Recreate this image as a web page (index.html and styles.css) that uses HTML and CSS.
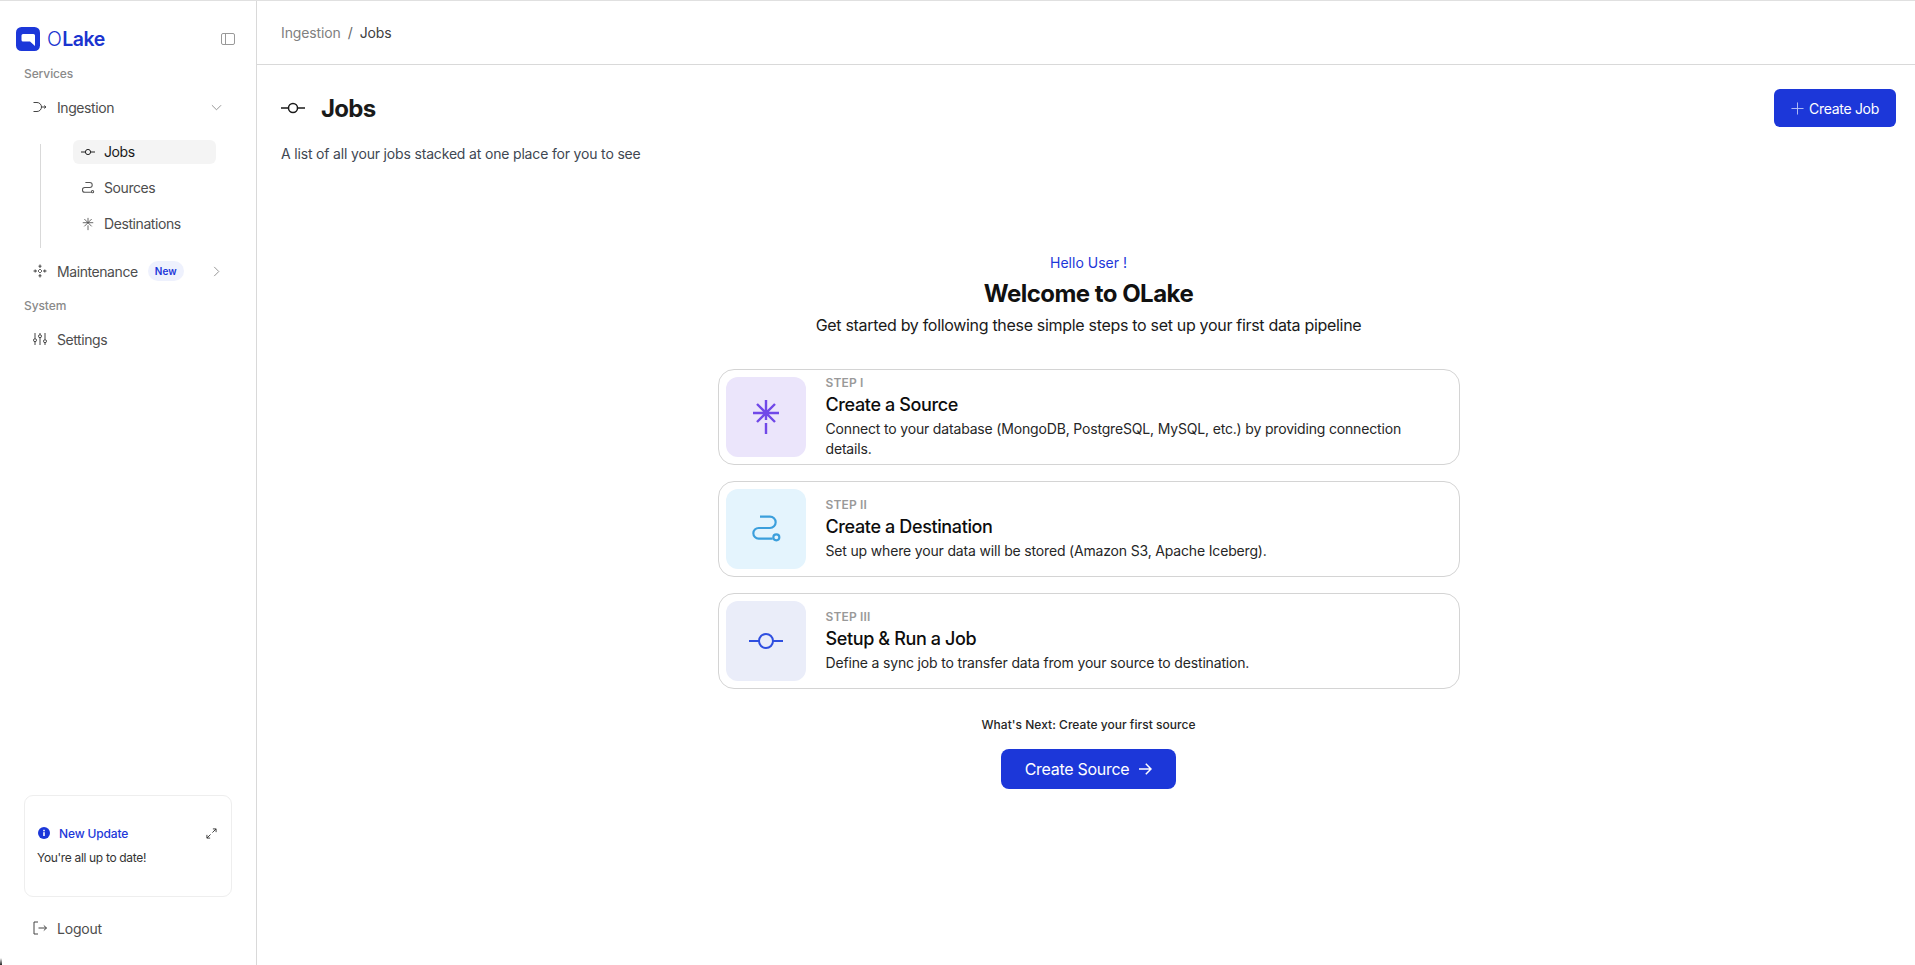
FILE: index.html
```html
<!DOCTYPE html>
<html lang="en">
  <head>
    <meta charset="UTF-8" />
    <title>OLake</title>
    <link rel="stylesheet" href="styles.css">
  </head>
  <body>
    <div class="app">
      <aside class="sidebar">
        <div class="brand">
          <svg class="logo" viewBox="0 0 24 24"><rect width="24" height="24" rx="5.500" fill="#1c37d9"/><path d="M5.500 8.500A1.500 1.500 0 0 1 7 7h10.500A1.500 1.500 0 0 1 19 8.500V19l-5-4.500H7A1.500 1.500 0 0 1 5.500 13z" fill="#fff"/></svg>
          <div class="brand_name"><span>O</span>Lake</div>
          <svg class="panel_icon" viewBox="0 0 14 12"><rect x=".5" y=".5" width="13" height="11" rx="1.500"/><path d="M4.500 .5v11"/></svg>
        </div>

        <div class="nav_label first">Services</div>
        <div class="nav_item">
          <svg class="nav_icon" viewBox="0 0 14 14"><path d="M.5 2.500H4a4.500 4.500 0 0 1 0 9H.5"/><path d="M8.500 7h4.500"/><path d="M11.200 5.600 13 7l-1.800 1.400" /></svg>
          <span>Ingestion</span>
          <svg class="chevron" viewBox="0 0 12 12"><path d="M1 3.500 6 8.500l5-5"/></svg>
        </div>
        <div class="subnav">
          <div class="subnav_list">
            <div class="sub_item active">
              <svg class="sub_icon" viewBox="0 0 14 14"><circle cx="7" cy="7" r="2.600"/><path d="M0 7h4.400M9.600 7H14"/></svg>
              <span>Jobs</span>
            </div>
            <div class="sub_item">
              <svg class="sub_icon" viewBox="0 0 96 84"><path d="M30 5h30a17 17 0 0 1 0 34H26a16 16 0 0 0 0 32h42" stroke-width="7"/><circle cx="79" cy="67" r="8" stroke-width="7"/></svg>
              <span>Sources</span>
            </div>
            <div class="sub_item">
              <svg class="sub_icon" viewBox="0 0 14 16"><path d="M7 1v6.500M1 6.500h12M2.800 2.300l8.400 8.400M11.200 2.300l-8.400 8.400M7 9.500V15"/></svg>
              <span>Destinations</span>
            </div>
          </div>
        </div>
        <div class="nav_item maintenance">
          <svg class="nav_icon" viewBox="0 0 14 14"><path d="M7 .5v3.500M5.500 2.200h3M7 10v3.500M5.500 11.800h3M.5 7H4M2.200 5.500v3M10 7h3.500M11.800 5.500v3"/><path d="M7 5 9 7 7 9 5 7z" stroke-width=".8"/></svg>
          <span>Maintenance</span>
          <span class="badge">New</span>
          <svg class="chevron right" viewBox="0 0 12 12"><path d="M3.500 1 8.500 6l-5 5"/></svg>
        </div>
        <div class="nav_label">System</div>
        <div class="nav_item settings">
          <svg class="nav_icon" viewBox="0 0 14 14"><path d="M2 1v5.500M2 10v3M7 1v1.500M7 6v7M12 1v6.500M12 11v2"/><circle cx="2" cy="8.200" r="1.500"/><circle cx="7" cy="4.200" r="1.500"/><circle cx="12" cy="9.200" r="1.500"/></svg>
          <span>Settings</span>
        </div>

        <div class="update_card">
          <div class="update_title">
            <svg class="info_icon" viewBox="0 0 12 12"><circle cx="6" cy="6" r="6" fill="#1c37d9"/><rect x="5.200" y="5.200" width="1.600" height="3.800" fill="#fff"/><rect x="5.200" y="2.800" width="1.600" height="1.500" fill="#fff"/></svg>
            <span>New Update</span>
            <svg class="expand_icon" viewBox="0 0 12 12"><path d="M7 5 11 1M7.500 1H11v3.500M5 7l-4 4M1 7.500V11h3.500"/></svg>
          </div>
          <div class="update_text">You're all up to date!</div>
        </div>
        <div class="nav_item logout">
          <svg class="nav_icon" viewBox="0 0 14 14"><path d="M5 1H1v12h4"/><path d="M5.500 7h8M10.800 4.500 13.500 7l-2.700 2.500"/></svg>
          <span>Logout</span>
        </div>
      </aside>

      <main class="main">
        <div class="crumbs">
          <span class="crumb_link">Ingestion</span>
          <span class="crumb_sep">/</span>
          <span class="crumb_now">Jobs</span>
        </div>
        <div class="content">
          <div class="page_head">
            <svg class="page_icon" viewBox="0 0 24 14"><circle cx="12" cy="7" r="4.500"/><path d="M0 7h7.500M16.500 7H24"/></svg>
            <h1>Jobs</h1>
            <button class="create_job">
              <svg viewBox="0 0 14 14"><path d="M7 .5v13M.5 7h13"/></svg>
              Create Job
            </button>
          </div>
          <p class="page_sub">A list of all your jobs stacked at one place for you to see</p>

          <section class="welcome">
            <div class="hello">Hello User !</div>
            <h2>Welcome to OLake</h2>
            <p class="intro">Get started by following these simple steps to set up your first data pipeline</p>

            <div class="steps">
              <div class="step">
                <div class="step_icon violet">
                  <svg width="26" height="34" viewBox="0 0 26 34"><path d="M13 0v20M0 13h26M4 4l18 18M22 4 4 22M13 23v11"/></svg>
                </div>
                <div class="step_body">
                  <div class="step_no">STEP I</div>
                  <div class="step_title">Create a Source</div>
                  <div class="step_desc">Connect to your database (MongoDB, PostgreSQL, MySQL, etc.) by providing connection details.</div>
                </div>
              </div>
              <div class="step">
                <div class="step_icon sky">
                  <svg width="32" height="28" viewBox="0 0 96 84"><path d="M30 5h30a17 17 0 0 1 0 34H26a16 16 0 0 0 0 32h42" stroke-width="6.500"/><circle cx="79" cy="67" r="9" stroke-width="6.500"/></svg>
                </div>
                <div class="step_body">
                  <div class="step_no">STEP II</div>
                  <div class="step_title">Create a Destination</div>
                  <div class="step_desc">Set up where your data will be stored (Amazon S3, Apache Iceberg).</div>
                </div>
              </div>
              <div class="step">
                <div class="step_icon indigo">
                  <svg width="34" height="16" viewBox="0 0 34 16"><circle cx="17" cy="8" r="7"/><path d="M0 8h10M24 8h10"/></svg>
                </div>
                <div class="step_body">
                  <div class="step_no">STEP III</div>
                  <div class="step_title">Setup &amp; Run a Job</div>
                  <div class="step_desc">Define a sync job to transfer data from your source to destination.</div>
                </div>
              </div>
            </div>

            <div class="next">What's Next: Create your first source</div>
            <button class="create_source">
              Create Source
              <svg viewBox="0 0 14 14"><path d="M1 7h12M7.800 1.800 13 7l-5.200 5.200"/></svg>
            </button>
          </section>
        </div>
      </main>
    </div>
    <div class="window_corner"></div>
  </body>
</html>
```

FILE: styles.css
```css
* {
  margin: 0;
  padding: 0;
  box-sizing: border-box;
}
html,
body {
  height: 100%;
}
body {
  font-family: "Inter", "Liberation Sans", sans-serif;
  color: #404040;
  background: #fff;
  overflow: hidden;
}
svg {
  fill: none;
  stroke: currentColor;
  flex-shrink: 0;
}
.app {
  display: flex;
  height: 965px;
  border-top: 1px solid #e0e0e0;
}
.window_corner {
  position: absolute;
  left: 0;
  bottom: 0;
  width: 2px;
  height: 7px;
  background: linear-gradient(to bottom, transparent, #222);
}

/* sidebar */
.sidebar {
  display: flex;
  flex-direction: column;
  flex: 0 0 257px;
  border-right: 1px solid #d9d9d9;
  padding-top: 26px;
  padding-bottom: 18px;
}
.brand {
  display: flex;
  align-items: center;
  height: 23px;
  padding-left: 16px;
  padding-right: 21px;
}
.logo {
  width: 24px;
  height: 24px;
  stroke: none;
}
.brand_name {
  margin-left: 7px;
  font-size: 19.500px;
  font-weight: 600;
  color: #1b34cf;
  letter-spacing: -0.5px;
}
.brand_name span {
  font-weight: 300;
  margin-right: 1px;
}
.panel_icon {
  width: 14px;
  height: 12px;
  margin-left: auto;
  color: #999;
}
.nav_label {
  height: 16px;
  line-height: 16px;
  margin-top: 8px;
  padding-left: 24px;
  font-size: 12px;
  font-weight: 500;
  letter-spacing: -0.1px;
  color: #8a8a8a;
}
.nav_label.first {
  margin-top: 16px;
}
.nav_item {
  display: flex;
  align-items: center;
  height: 36px;
  margin-top: 8px;
  padding-left: 33px;
  padding-right: 34px;
  padding-bottom: 2px;
  font-size: 14px;
  letter-spacing: -0.42px;
  color: #4d4d4d;
}
.nav_icon {
  width: 14px;
  height: 14px;
  margin-right: 10px;
  color: #444;
}
.chevron {
  width: 11px;
  height: 11px;
  margin-left: auto;
  color: #8c8c8c;
}
.subnav {
  margin-top: 18px;
  margin-left: 40px;
  padding-left: 32px;
  padding-bottom: 12px;
  padding-right: 40px;
  border-left: 1px solid #d9d9d9;
}
.subnav_list {
  display: flex;
  flex-direction: column;
  gap: 12px;
  margin-top: -4px;
}
.sub_item {
  display: flex;
  align-items: center;
  height: 24px;
  padding-left: 8px;
  padding-bottom: 1px;
  border-radius: 6px;
  font-size: 14px;
  letter-spacing: -0.42px;
  color: #4d4d4d;
}
.sub_item.active {
  background: #f4f4f4;
  color: #1a1a1a;
}
.sub_icon {
  width: 14px;
  height: 14px;
  margin-right: 9px;
  color: #555;
}
.sub_item.active .sub_icon {
  color: #222;
}
.maintenance {
  margin-top: 6px;
}
.badge {
  margin-left: 10px;
  width: 36px;
  height: 20px;
  line-height: 20px;
  text-align: center;
  border-radius: 10px;
  background: #eef1fd;
  color: #1c37d9;
  font-size: 10px;
  font-weight: 600;
  letter-spacing: 0;
}
.update_card {
  margin-top: auto;
  margin-left: 24px;
  margin-right: 24px;
  height: 102px;
  border: 1px solid #eee;
  border-radius: 9px;
  padding: 29px 12px 0;
}
.update_title {
  display: flex;
  align-items: center;
  height: 16px;
  padding-left: 1px;
  font-size: 12px;
  font-weight: 500;
  letter-spacing: -0.15px;
  color: #1c37d9;
}
.info_icon {
  width: 12px;
  height: 12px;
  margin-right: 9px;
  stroke: none;
}
.expand_icon {
  width: 11px;
  height: 11px;
  margin-left: auto;
  margin-right: 2px;
  color: #333;
}
.update_text {
  margin-top: 9px;
  font-size: 12px;
  line-height: 16px;
  letter-spacing: -0.33px;
  color: #333;
}
.logout {
  margin-top: 14px;
  letter-spacing: -0.2px;
}

/* main */
.main {
  flex: 1;
  min-width: 0;
}
.crumbs {
  display: flex;
  align-items: center;
  gap: 7px;
  height: 64px;
  padding-left: 24px;
  border-bottom: 1px solid #d9d9d9;
  font-size: 14px;
  letter-spacing: -0.12px;
}
.crumb_link {
  color: #808080;
}
.crumb_sep {
  color: #666;
}
.crumb_now {
  color: #404040;
}
.content {
  padding: 24px 19px 0 24px;
}
.page_head {
  display: flex;
  align-items: center;
  height: 38px;
}
.page_icon {
  width: 24px;
  height: 14px;
  margin-right: 16px;
  color: #1a1a1a;
  stroke-width: 1.5;
}
h1 {
  font-size: 24px;
  font-weight: 700;
  letter-spacing: -0.7px;
  color: #1a1a1a;
}
.create_job {
  display: flex;
  align-items: center;
  justify-content: center;
  gap: 5px;
  margin-left: auto;
  width: 122px;
  height: 38px;
  border: none;
  border-radius: 6px;
  background: #1c37d9;
  color: #fff;
  font-family: inherit;
  font-size: 14px;
  letter-spacing: -0.3px;
}
.create_job svg {
  width: 13px;
  height: 13px;
  color: #b9c3f5;
}
.page_sub {
  margin-top: 17px;
  font-size: 14px;
  line-height: 20px;
  letter-spacing: -0.17px;
  color: #404752;
}
.welcome {
  display: flex;
  flex-direction: column;
  align-items: center;
  margin-top: 89px;
  text-align: center;
}
.hello {
  font-size: 14px;
  line-height: 20px;
  color: #1c37d9;
}
h2 {
  margin-top: 5px;
  font-size: 24px;
  line-height: 32px;
  font-weight: 700;
  letter-spacing: -0.53px;
  color: #111;
}
.intro {
  margin-top: 3px;
  font-size: 16px;
  line-height: 24px;
  letter-spacing: -0.31px;
  color: #1a1a1a;
}
.steps {
  display: flex;
  flex-direction: column;
  gap: 16px;
  width: 742px;
  margin-top: 32px;
}
.step {
  display: flex;
  align-items: center;
  gap: 20px;
  height: 96px;
  padding: 7px;
  border: 1px solid #d4d4d4;
  border-radius: 16px;
  text-align: left;
}
.step_icon {
  display: flex;
  align-items: center;
  justify-content: center;
  flex: 0 0 80px;
  height: 80px;
  border-radius: 12px;
}
.step_icon svg {
  stroke-width: 2;
}
.violet {
  background: #ebe5fb;
  color: #7048e8;
}
.violet svg {
  stroke-width: 2.400;
}
.sky {
  background: #e4f4fd;
  color: #3b9fdc;
}
.indigo {
  background: #eaedf9;
  color: #2f4fe0;
}
.step_body {
  padding-right: 24px;
}
.step_no {
  font-size: 12px;
  line-height: 16px;
  font-weight: 600;
  letter-spacing: 0.15px;
  color: #999;
}
.step_title {
  font-size: 18px;
  line-height: 28px;
  font-weight: 500;
  letter-spacing: -0.37px;
  color: #0d0d0d;
}
.step_desc {
  font-size: 14px;
  line-height: 20px;
  letter-spacing: -0.17px;
  color: #262626;
}
.next {
  margin-top: 28px;
  font-size: 12px;
  line-height: 16px;
  font-weight: 500;
  letter-spacing: 0.03px;
  color: #262626;
}
.create_source {
  display: flex;
  align-items: center;
  justify-content: center;
  gap: 9px;
  width: 175px;
  height: 40px;
  margin-top: 16px;
  border: none;
  border-radius: 8px;
  background: #1c37d9;
  color: #fff;
  font-family: inherit;
  font-size: 16px;
  letter-spacing: -0.28px;
}
.create_source svg {
  width: 14px;
  height: 14px;
  stroke-width: 1.5;
}
```
